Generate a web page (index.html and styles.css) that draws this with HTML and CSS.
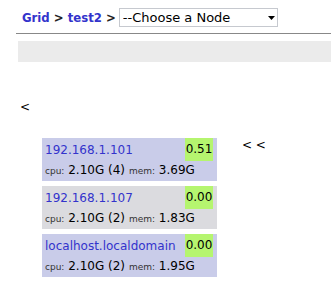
FILE: index.html
```html
<!DOCTYPE html>
<html lang="en">
<head>
    <meta charset="UTF-8">
    <title>Grid - test2</title>
    <link rel="stylesheet" href="styles.css">
</head>
<body>
    <div class="crumbs">
        <span class="trail"><a href="#" class="crumb">Grid</a> &gt; <a href="#" class="crumb">test2</a> &gt;</span>
        <label class="node-pick">
            <select class="node-select">
                <option selected>--Choose a Node</option>
                <option>192.168.1.101</option>
                <option>192.168.1.107</option>
                <option>localhost.localdomain</option>
            </select>
            <svg class="node-arrow" width="7" height="4" viewBox="0 0 7 4"><path d="M0 0H7L3.5 4Z" fill="#000"/></svg>
        </label>
    </div>
    <hr class="rule">
    <div class="toolbar"></div>

    <div class="nav-back">&lt;</div>

    <div class="cluster">
        <div class="hosts">
            <div class="host host-odd">
                <div class="host-top">
                    <a href="#" class="host-name">192.168.1.101</a>
                    <span class="load">0.51</span>
                </div>
                <div class="host-stats"><small>cpu:</small> 2.10G (4) <small>mem:</small> 3.69G</div>
            </div>
            <div class="host host-even">
                <div class="host-top">
                    <a href="#" class="host-name">192.168.1.107</a>
                    <span class="load">0.00</span>
                </div>
                <div class="host-stats"><small>cpu:</small> 2.10G (2) <small>mem:</small> 1.83G</div>
            </div>
            <div class="host host-odd">
                <div class="host-top">
                    <a href="#" class="host-name">localhost.localdomain</a>
                    <span class="load">0.00</span>
                </div>
                <div class="host-stats"><small>cpu:</small> 2.10G (2) <small>mem:</small> 1.95G</div>
            </div>
        </div>
        <div class="nav-more">&lt; &lt;</div>
    </div>
</body>
</html>
```
FILE: styles.css
```css
body {
    margin: 0;
    font-family: "DejaVu Sans", Verdana, sans-serif;
    font-size: 12px;
    color: #000;
    background-color: #fff;
}
a {
    color: #3333cc;
    text-decoration: none;
}
.crumbs {
    display: flex;
    align-items: center;
    padding: 8px 0 0 22px;
    height: 19px;
}
.trail {
    font-family: "DejaVu Sans Condensed", "DejaVu Sans", sans-serif;
    font-stretch: condensed;
    font-weight: bold;
    font-size: 13px;
    color: #222;
    margin-right: 3px;
    white-space: pre;
}
.node-pick {
    position: relative;
    display: block;
}
.node-select {
    -webkit-appearance: none;
    appearance: none;
    display: block;
    width: 159px;
    height: 19px;
    margin: 0;
    padding: 0 0 0 3px;
    border: 1px solid #c6c9cf;
    border-radius: 0;
    background-color: #fff;
    font-family: "DejaVu Sans", sans-serif;
    font-size: 13px;
    color: #000;
}
.node-arrow {
    position: absolute;
    left: 149px;
    top: 8px;
    pointer-events: none;
}
.rule {
    margin: 6px 0 0 16px;
    border: none;
    border-top: 1px solid #888;
    height: 0;
}
.toolbar {
    margin: 7px 0 0 18px;
    height: 21px;
    background-color: #ebebeb;
}
.nav-back {
    margin: 38px 0 0 20px;
    line-height: 14px;
}
.cluster {
    display: flex;
    align-items: flex-start;
    margin: 24px 0 0 42px;
}
.hosts {
    display: flex;
    flex-direction: column;
    gap: 5px;
    width: 175px;
}
.host {
    padding: 0 4px 1px 3px;
}
.host-odd {
    background-color: #c9cce9;
}
.host-even {
    background-color: #dbdbdf;
}
.host-top {
    display: flex;
    align-items: center;
    justify-content: space-between;
    height: 23px;
}
.host-name {
    font-size: 12px;
}
.load {
    width: 28px;
    line-height: 23px;
    text-align: center;
    background-color: #b5f56f;
    font-size: 12px;
}
.host-stats {
    line-height: 18px;
    white-space: nowrap;
}
.host-stats small {
    font-size: 9px;
    color: #333;
}
.nav-more {
    margin: 0 0 0 25px;
    line-height: 14px;
}
```
